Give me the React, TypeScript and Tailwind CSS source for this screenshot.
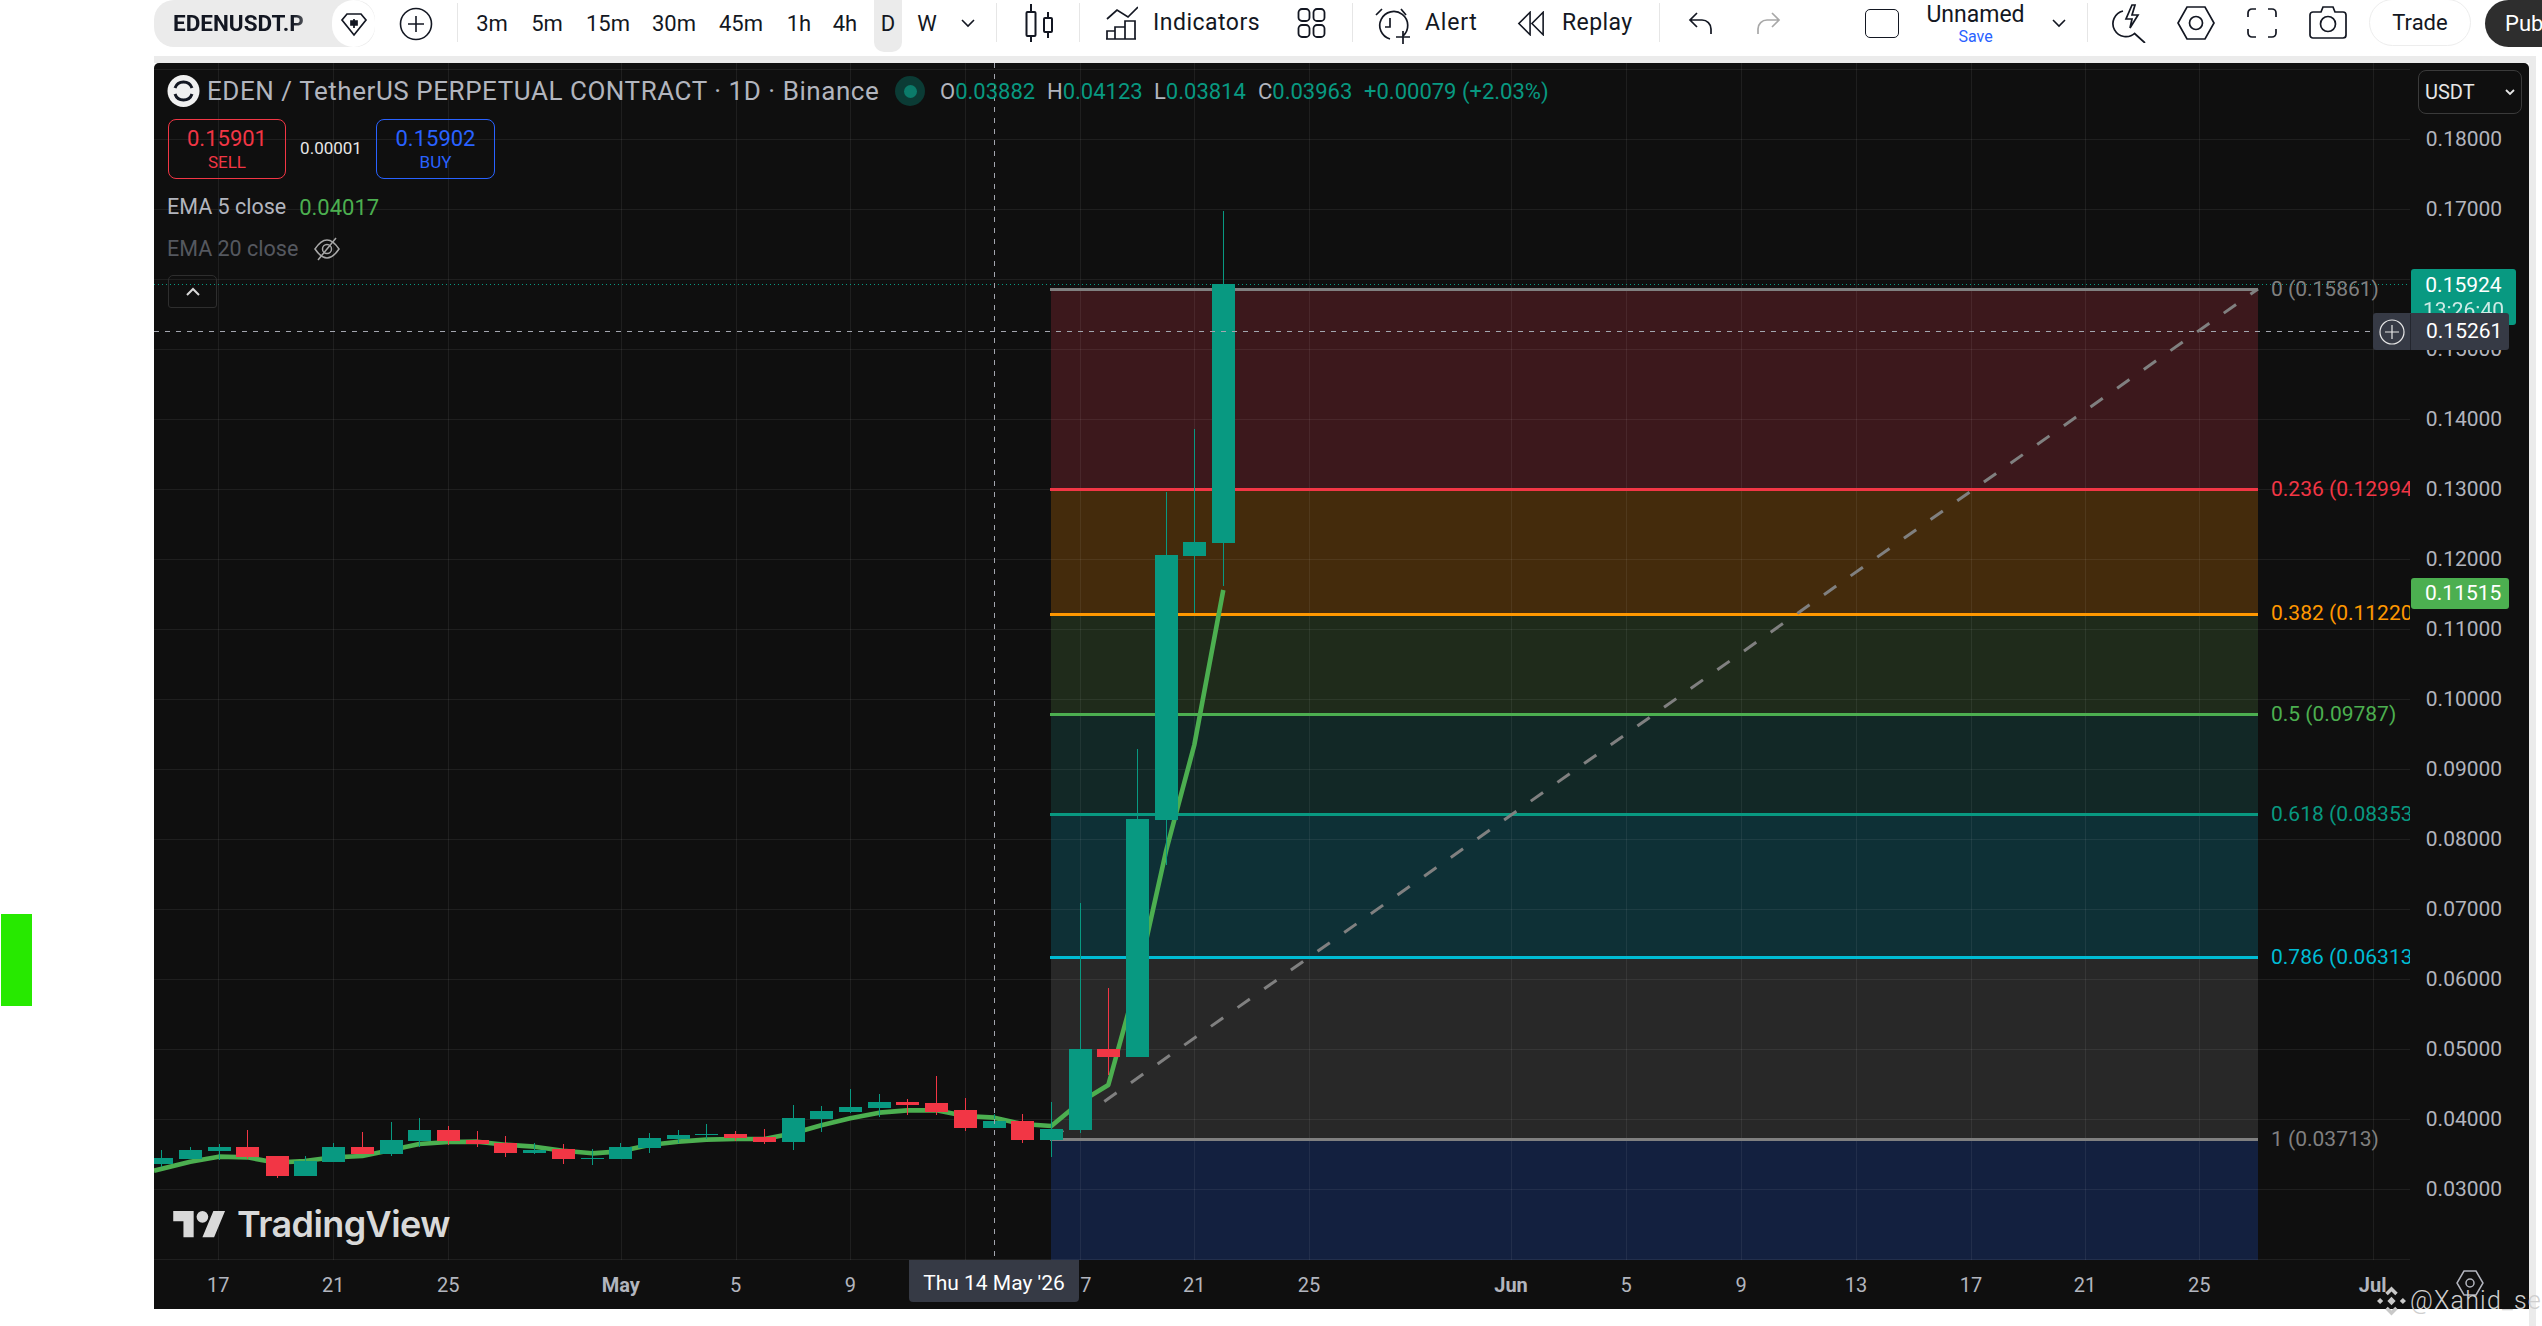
import React from "react";

const TEAL = "#089981";
const RED = "#f23645";

type C = [number, number, number, number, number, string];
const z6: [number, number, number, number, number, string][] = [
  [34, 300, 324, 342, 350, "g"], [121, 292, 300, 327, 327, "g"], [206, 282, 291, 303, 330, "g"], [292, 240, 291, 321, 327, "r"],
  [380, 318, 318, 378, 384, "r"], [464, 318, 333, 378, 378, "g"], [550, 279, 291, 336, 336, "g"], [637, 246, 291, 312, 312, "r"],
  [724, 216, 270, 312, 318, "g"], [808, 204, 240, 273, 291, "g"], [895, 228, 240, 273, 285, "r"], [982, 243, 270, 282, 291, "r"],
  [1066, 258, 279, 309, 321, "r"], [1153, 279, 300, 309, 312, "g"], [1240, 282, 298, 327, 342, "r"], [1327, 297, 324, 327, 345, "g"],
  [1411, 279, 291, 327, 327, "g"],
];
const z7: [number, number, number, number, number, string][] = [
  [28, 249, 264, 294, 309, "g"], [115, 240, 255, 267, 279, "g"], [199, 222, 252, 255, 267, "g"], [286, 243, 252, 264, 273, "r"],
  [373, 237, 261, 276, 282, "r"], [460, 165, 204, 276, 300, "g"], [544, 168, 183, 207, 246, "g"], [631, 117, 171, 186, 189, "g"],
  [718, 132, 156, 174, 201, "g"], [802, 147, 156, 165, 195, "r"], [889, 78, 159, 186, 195, "r"], [976, 144, 180, 234, 243, "r"],
  [1063, 192, 213, 234, 234, "g"], [1147, 192, 213, 270, 279, "r"], [1234, 156, 237, 270, 321, "g"],
];
const candles: C[] = [
  ...z6.map(([x, a, b, c, d, k]): C => [150 + x / 3, 1050 + a / 3, 1050 + b / 3, 1050 + c / 3, 1050 + d / 3, k]),
  ...z7.map(([x, a, b, c, d, k]): C => [640 + x / 3, 1050 + a / 3, 1050 + b / 3, 1050 + c / 3, 1050 + d / 3, k]),
  [1080.3, 903, 1049, 1130, 1133, "g"],
  [1108.3, 988, 1049, 1057, 1075, "r"],
  [1137.3, 749, 819, 1057, 1057, "g"],
  [1166.3, 492, 555, 820, 865, "g"],
  [1194.3, 429, 542, 556, 613, "g"],
  [1223.3, 211, 284, 543, 586, "g"],
];

const ema6: [number, number][] = [[12, 362], [121, 335], [206, 320], [292, 322], [380, 338], [464, 333], [550, 322], [637, 318], [724, 300], [808, 282], [895, 276], [982, 275], [1066, 284], [1153, 290], [1240, 302], [1327, 310], [1411, 304]];
const ema7: [number, number][] = [[28, 285], [115, 275], [199, 269], [286, 267], [373, 267], [460, 250], [544, 226], [631, 205], [718, 188], [802, 181], [889, 181], [976, 198], [1063, 203], [1147, 222], [1234, 228]];
const emaPts = [
  ...ema6.map(([x, y]) => [150 + x / 3, 1050 + y / 3]),
  ...ema7.map(([x, y]) => [640 + x / 3, 1050 + y / 3]),
  [1080.3, 1102], [1108.3, 1085], [1137.3, 980], [1166.3, 850], [1194.3, 745], [1223.3, 590],
].map((p) => p.join(",")).join(" ");

const hGrid = Array.from({ length: 18 }, (_, i) => 69.3 + i * 70);
const vGrid = [218.3, 333.3, 448.3, 620.8, 735.5, 850.3, 965.3, 1080.3, 1194.3, 1309, 1511, 1626, 1741, 1856, 1971, 2085, 2199.3, 2372.7];

const fills: [number, number, string][] = [
  [289, 489, "#3c181c"], [489, 614, "#442b0c"], [614, 714, "#1f2b1b"], [714, 814, "#122826"], [814, 957, "#0e3036"], [957, 1139, "#282828"], [1139, 1260, "#13203f"],
];
const fibs: [number, string, string][] = [
  [289.3, "#808080", "0 (0.15861)"], [489.3, "#f23645", "0.236 (0.12994)"], [614, "#ff9800", "0.382 (0.11220)"], [714.3, "#4caf50", "0.5 (0.09787)"],
  [814.3, "#089981", "0.618 (0.08353)"], [957.3, "#00bcd4", "0.786 (0.06313)"], [1139.3, "#808080", "1 (0.03713)"],
];

const prices = ["0.18000", "0.17000", "0.16000", "0.15000", "0.14000", "0.13000", "0.12000", "0.11000", "0.10000", "0.09000", "0.08000", "0.07000", "0.06000", "0.05000", "0.04000", "0.03000"];

const times: [number, string, boolean][] = [
  [218.3, "17", false], [333.3, "21", false], [448.3, "25", false], [620.8, "May", true], [735.5, "5", false], [850.3, "9", false], [1080.3, "17", false], [1194.3, "21", false],
  [1309, "25", false], [1511, "Jun", true], [1626, "5", false], [1741, "9", false], [1856, "13", false], [1971, "17", false], [2085, "21", false], [2199.3, "25", false], [2372.7, "Jul", true],
];

const intervals: [string, string][] = [
  ["3m", "w-[68px]"], ["5m", "w-[42px]"], ["15m", "w-[80px]"], ["30m", "w-[52px]"], ["45m", "w-[82px]"], ["1h", "w-[34px]"], ["4h", "w-[58px]"],
];

const Divider = () => <div className="w-px h-[39px] mt-[3px] bg-[#e6e6e6] shrink-0" />;

function Header() {
  return (
    <div className="flex h-14 shrink-0 items-start pl-[154px] text-[22px] text-[#131722] whitespace-nowrap bg-white font-['Roboto',sans-serif]">
      <div className="w-[221px] h-[47px] rounded-[20px] bg-[#ebebeb] flex items-center shrink-0">
        <span className="ml-[19px] w-[140px] font-bold text-[22.5px] overflow-hidden bg-clip-text text-transparent bg-gradient-to-r from-[#131722] from-[85%] to-[#8a8a8a]">EDENUSDT.P</span>
        <span className="ml-[19px] w-[43px] h-[47px] rounded-full bg-white flex items-center justify-center">
          <svg width="28" height="26" viewBox="0 0 28 26" fill="none" stroke="#131722" strokeWidth="1.7">
            <path d="M7 3h14l5 6-12 15L2 9z" />
            <path d="M14 8v9M11 10h6v4h-6z" fill="#131722" />
          </svg>
        </span>
      </div>
      <div className="w-[82px] h-[47px] flex items-center justify-center shrink-0">
        <svg width="34" height="34" viewBox="0 0 34 34" fill="none" stroke="#131722" strokeWidth="1.6">
          <circle cx="17" cy="17" r="15.5" />
          <path d="M17 9v16M9 17h16" />
        </svg>
      </div>
      <Divider />
      {intervals.map(([t, w]) => (
        <div key={t} className={`${w} h-[46px] flex items-center justify-center shrink-0`}>{t}</div>
      ))}
      <div className="w-[28px] h-[52px] pb-[6px] rounded-b-[10px] bg-[#ebebeb] flex items-center justify-center shrink-0">D</div>
      <div className="w-[50px] h-[46px] flex items-center justify-center shrink-0">W</div>
      <div className="w-[32px] h-[46px] flex items-center justify-center shrink-0">
        <svg width="16" height="10" viewBox="0 0 16 10" fill="none" stroke="#131722" strokeWidth="1.6"><path d="M2 2l6 6 6-6" /></svg>
      </div>
      <div className="w-[12px] shrink-0" />
      <Divider />
      <div className="w-[82px] h-[46px] flex items-center justify-center shrink-0">
        <svg width="30" height="40" viewBox="0 0 30 40" fill="none" stroke="#131722" strokeWidth="2" className="ml-[4px]">
          <path d="M6 1v8M6 33v6" /><rect x="1.5" y="9" width="9" height="24" rx="1" />
          <path d="M23 9v6M23 29v6" /><rect x="19" y="15" width="8" height="14" rx="1" />
        </svg>
      </div>
      <Divider />
      <div className="w-[200px] h-[46px] flex items-center shrink-0 pl-[26px]">
        <svg width="32" height="34" viewBox="0 0 32 34" fill="none" stroke="#131722" strokeWidth="1.7" className="shrink-0">
          <path d="M1 13l10-9 11 7L32 1" />
          <path d="M1 33V25h8v8zM9 33V21h10v12zM19 33V15h10v18zM0 33h30" />
        </svg>
        <span className="ml-[15px] text-[23px] tracking-[0.5px]">Indicators</span>
      </div>
      <div className="w-[72px] h-[46px] flex items-center justify-center shrink-0 pr-[10px]">
        <svg width="29" height="30" viewBox="0 0 28 30" fill="none" stroke="#131722" strokeWidth="1.8">
          <rect x="1" y="1" width="11" height="12" rx="3.5" /><rect x="16" y="1" width="11" height="12" rx="3.5" />
          <rect x="1" y="17" width="11" height="12" rx="3.5" /><rect x="16" y="17" width="11" height="12" rx="3.5" />
        </svg>
      </div>
      <Divider />
      <div className="w-[306px] h-[46px] flex items-center shrink-0 pl-[22px]">
        <svg width="38" height="36" viewBox="0 0 38 36" fill="none" stroke="#131722" strokeWidth="1.7" className="shrink-0 mt-[6px]">
          <path d="M28 28a14 14 0 1 0-13 3" />
          <path d="M15 10v9h-5M1 7l6-6M31 7l-5-6M28 23v13M21 29h14" />
        </svg>
        <span className="ml-[12px] w-[54px] text-[23px] tracking-[0.8px]">Alert</span>
        <svg width="28" height="25" viewBox="0 0 30 26" fill="none" stroke="#131722" strokeWidth="1.7" className="ml-[38px] shrink-0">
          <path d="M14 1L2 13l12 12zM28 1L16 13l12 12z" />
        </svg>
        <span className="ml-[17px] text-[23px] tracking-[0.4px]">Replay</span>
      </div>
      <Divider />
      <div className="w-[205px] h-[46px] flex items-center shrink-0 pl-[28px]">
        <svg width="25" height="24" viewBox="0 0 25 24" fill="none" stroke="#131722" strokeWidth="1.7" className="shrink-0">
          <path d="M9 2L2 9l7 7M2 9h12a9 9 0 0 1 9 9v5" />
        </svg>
        <svg width="25" height="24" viewBox="0 0 25 24" fill="none" stroke="#a8a8a8" strokeWidth="1.7" className="ml-[43px] shrink-0">
          <path d="M16 2l7 7-7 7M23 9H11a9 9 0 0 0-9 9v5" />
        </svg>
      </div>
      <div className="w-[35px] h-[46px] flex items-center shrink-0">
        <div className="w-[34px] h-[29px] border-[1.6px] border-[#131722] rounded-[5px]" />
      </div>
      <div className="w-[151px] flex flex-col items-center shrink-0">
        <span className="leading-[26px] mt-[2px] text-[23px]">Unnamed</span>
        <span className="text-[16px] leading-[17px] text-[#2962ff]">Save</span>
      </div>
      <svg width="16" height="10" viewBox="0 0 16 10" fill="none" stroke="#131722" strokeWidth="1.6" className="mr-[20px] mt-[18px] shrink-0"><path d="M2 2l6 6 6-6" /></svg>
      <Divider />
      <div className="h-[46px] flex items-center shrink-0 pl-[24px]">
        <svg width="34" height="40" viewBox="0 0 34 40" fill="none" stroke="#131722" strokeWidth="1.7" className="shrink-0">
          <path d="M11 8a13 13 0 1 0 12 22M22 30l11 10" />
          <path d="M20 2l-6 14h6l-2 9 8-13h-6l3-10z" />
        </svg>
        <svg width="38" height="36" viewBox="0 0 38 36" fill="none" stroke="#131722" strokeWidth="1.7" className="ml-[31px] shrink-0">
          <path d="M10 2h18l9 16-9 16H10L1 18z" /><circle cx="19" cy="18" r="6.5" />
        </svg>
        <svg width="30" height="30" viewBox="0 0 30 30" fill="none" stroke="#131722" strokeWidth="1.7" className="ml-[32px] shrink-0">
          <path d="M1 9V5a4 4 0 0 1 4-4h4M21 1h4a4 4 0 0 1 4 4v4M29 21v4a4 4 0 0 1-4 4h-4M9 29H5a4 4 0 0 1-4-4v-4" />
        </svg>
        <svg width="38" height="34" viewBox="0 0 38 34" fill="none" stroke="#131722" strokeWidth="1.7" className="ml-[32px] shrink-0">
          <path d="M4 6h8l2-5h10l2 5h8a3 3 0 0 1 3 3v20a3 3 0 0 1-3 3H4a3 3 0 0 1-3-3V9a3 3 0 0 1 3-3z" /><circle cx="19" cy="18" r="7.5" />
        </svg>
      </div>
      <div className="ml-[22px] w-[102px] h-[47px] rounded-[24px] border border-[#ededed] flex items-center justify-center shrink-0 mt-[-1px]">Trade</div>
      <div className="ml-[14px] w-[80px] h-[47px] rounded-l-[24px] bg-[#2e2e2e] text-white flex items-center pl-[20px] shrink-0">Pub</div>
    </div>
  );
}

function Plot() {
  return (
    <svg className="absolute left-0 top-0" width="2375" height="1246" viewBox="154 63 2375 1246">
      <g shapeRendering="crispEdges">
        {fills.map(([a, b, col]) => <rect key={a} x="1051" y={a} width="1207" height={b - a} fill={col} />)}
        {hGrid.map((y) => <rect key={y} x="154" y={Math.round(y) - 0.5} width="2256" height="1" fill="#ffffff" opacity="0.065" />)}
        {vGrid.map((x) => <rect key={x} x={Math.round(x) - 0.5} y="63" width="1" height="1197" fill="#ffffff" opacity="0.065" />)}
        {fibs.map(([y, col]) => <rect key={y} x="1050" y={Math.round(y) - 1.5} width="1208" height="3" fill={col} />)}
      </g>
      <line x1="1051" y1="1139" x2="2258" y2="289" stroke="#808080" strokeWidth="3" strokeDasharray="15 17.6" />
      <polyline points={emaPts} fill="none" stroke="#4caf50" strokeWidth="4.6" strokeLinejoin="round" />
      <g shapeRendering="crispEdges">
        {candles.map(([x, wt, bt, bb, wb, k], i) => {
          const col = k === "g" ? TEAL : RED;
          const cx = Math.round(x);
          return (
            <g key={i} fill={col}>
              <rect x={cx} y={wt} width="1" height={wb - wt} />
              <rect x={cx - 11} y={bt} width="23" height={Math.max(bb - bt, 1)} />
            </g>
          );
        })}
      </g>
      <line x1="154" y1="284.5" x2="2410" y2="284.5" stroke={TEAL} strokeWidth="1" strokeDasharray="1 3" />
      <line x1="154" y1="331.5" x2="2373" y2="331.5" stroke="#a3a6af" strokeWidth="1" strokeDasharray="5 6" />
      <line x1="994.5" y1="63" x2="994.5" y2="1260" stroke="#a3a6af" strokeWidth="1" strokeDasharray="5 6" />
    </svg>
  );
}

function Legend() {
  return (
    <div className="absolute left-[13px] top-[12px] flex flex-col items-start whitespace-nowrap">
      <div className="flex items-center h-[32px] text-[#b2b5be]">
        <svg width="33" height="32" viewBox="0 0 33 32" className="shrink-0">
          <circle cx="16.5" cy="16" r="16" fill="#f0f0f0" />
          <path d="M8 13a9 9 0 0 1 17 0M8 19a9 9 0 0 0 17 0" fill="none" stroke="#131722" strokeWidth="3" />
        </svg>
        <span className="ml-[7px] text-[26px] tracking-[0.55px] w-[676px]">EDEN / TetherUS PERPETUAL CONTRACT · 1D · Binance</span>
        <span className="ml-[12px] w-[30px] h-[30px] rounded-full bg-[#0b3b35] flex items-center justify-center shrink-0">
          <span className="w-[13px] h-[13px] rounded-full bg-[#0b7b6a]" />
        </span>
        <div className="ml-[15px] flex text-[22px]">
          <span className="w-[107px]">O<span className="text-[#089981]">0.03882</span></span>
          <span className="w-[107px]">H<span className="text-[#089981]">0.04123</span></span>
          <span className="w-[104px]">L<span className="text-[#089981]">0.03814</span></span>
          <span className="w-[106px]">C<span className="text-[#089981]">0.03963</span></span>
          <span className="text-[#089981]">+0.00079 (+2.03%)</span>
        </div>
      </div>
      <div className="flex items-center mt-[12px] ml-px">
        <div className="w-[118px] h-[60px] rounded-[8px] border border-[#f23645] flex flex-col items-center justify-center text-[#f23645]">
          <span className="text-[22px] leading-[25px]">0.15901</span>
          <span className="text-[17px] leading-[22px]">SELL</span>
        </div>
        <span className="w-[90px] text-center text-[17px] text-[#e6e6e6]">0.00001</span>
        <div className="w-[119px] h-[60px] rounded-[8px] border border-[#2962ff] flex flex-col items-center justify-center text-[#2962ff]">
          <span className="text-[22px] leading-[25px]">0.15902</span>
          <span className="text-[17px] leading-[22px]">BUY</span>
        </div>
      </div>
      <div className="flex items-center h-[42px] mt-[7px] text-[21.5px] text-[#b2b5be]">
        EMA 5 close<span className="ml-[13px] text-[22px] text-[#4caf50]">0.04017</span>
      </div>
      <div className="flex items-center h-[42px] text-[21.5px] text-[#55585f]">
        EMA 20 close
        <svg width="28" height="24" viewBox="0 0 28 24" fill="none" stroke="#a8a8a8" strokeWidth="1.5" className="ml-[15px]">
          <path d="M2 12c4-6 8-9 12-9s8 3 12 9c-4 6-8 9-12 9s-8-3-12-9z" /><circle cx="14" cy="12" r="4.5" /><path d="M5 23L23 1" stroke="#a8a8a8" />
        </svg>
      </div>
      <div className="w-[49px] h-[33px] mt-[5px] ml-px rounded-t-[5px] rounded-b-[3px] border border-[#2e2e2e] flex items-center justify-center">
        <svg width="16" height="10" viewBox="0 0 16 10" fill="none" stroke="#d8d8d8" strokeWidth="2"><path d="M2 8l6-6 6 6" /></svg>
      </div>
    </div>
  );
}

function PriceAxis() {
  return (
    <div className="absolute left-[2263px] top-[41px] w-[94px] flex flex-col items-center text-[21px] text-[#b2b5be]">
      {prices.map((p) => <div key={p} className="h-[70px] flex items-center leading-none">{p}</div>)}
    </div>
  );
}

function Chart() {
  return (
    <div className="relative w-[2375px] h-[1246px] shrink-0 bg-[#0f0f0f] rounded-t-[5px] overflow-hidden font-['Roboto',sans-serif]">
      <Plot />
      <Legend />
      <div className="absolute left-[2264px] top-[7px] w-[104px] h-[44px] rounded-[8px] border border-[#3a3a3a] flex items-center justify-between px-[6px] text-[20px] text-[#e6e6e6]">
        USDT
        <svg width="10" height="8" viewBox="0 0 10 8" fill="none" stroke="#e6e6e6" strokeWidth="1.8"><path d="M1 2l4 4 4-4" /></svg>
      </div>
      {fibs.map(([y, col, t]) => (
        <div key={t} className="absolute left-[2117px] w-[139px] h-[28px] flex items-center text-[21px] whitespace-nowrap overflow-hidden" style={{ top: y - 63 - 14, color: col }}>{t}</div>
      ))}
      <PriceAxis />
      <div className="absolute left-[2257px] top-[206px] w-[105px] h-[56px] rounded-[3px] bg-[#089981] text-white text-[21px] flex flex-col items-center leading-[25px] pt-[4px]">
        <span>0.15924</span><span className="opacity-80">13:26:40</span>
      </div>
      <div className="absolute left-[2219px] top-[250px] w-[136px] h-[37px] rounded-[3px] bg-[#363a45] flex items-center text-white text-[21px] pt-[1px]">
        <span className="w-[38px] h-[36px] flex items-center justify-center border-r border-[#23262e]">
          <svg width="26" height="26" viewBox="0 0 26 26" fill="none" stroke="#e6e6e6" strokeWidth="1.2"><circle cx="13" cy="13" r="12" /><path d="M13 6v14M6 13h14" /></svg>
        </span>
        <span className="ml-[15px]">0.15261</span>
      </div>
      <div className="absolute left-[2257px] top-[515px] w-[98px] h-[31px] rounded-[3px] bg-[#4caf50] text-white text-[21px] flex items-center pl-[14px]">0.11515</div>

      <div className="absolute left-[19px] top-[1143px] flex items-center">
        <svg width="53" height="27" viewBox="0 0 36 18.5" fill="#d9d9d9">
          <path d="M14 18H7V7H0V0h14v18zM28 18h-8l7.5-18h8L28 18z" /><circle cx="20" cy="4" r="4" />
        </svg>
        <span className="ml-[11px] text-[36px] leading-[36px] font-semibold tracking-[-0.6px] text-[#d9d9d9] font-['Inter',sans-serif]">TradingView</span>
      </div>

      <div className="absolute left-0 top-[1197px] w-[2375px] h-[49px] text-[20px] text-[#b2b5be]">
        {times.map(([x, t, b]) => (
          <span key={x} className={`absolute top-[10px] -translate-x-1/2 ${b ? "font-bold" : ""}`} style={{ left: x - 154 }}>{t}</span>
        ))}
        <div className="absolute left-[755px] top-0 w-[170px] h-[42px] rounded-b-[4px] bg-[#363a45] text-white flex items-center justify-center text-[21px] pt-[5px]">Thu 14 May '26</div>
        <svg width="28" height="26" viewBox="0 0 28 26" fill="none" stroke="#b2b5be" strokeWidth="1.5" className="absolute left-[2302px] top-[10px]">
          <path d="M8 1h12l7 12-7 12H8L1 13z" /><circle cx="14" cy="13" r="4" />
        </svg>
      </div>
    </div>
  );
}

export default function App() {
  return (
    <div className="relative w-[2542px] h-[1326px] overflow-hidden bg-white">
      <Header />
      <div className="flex h-[1270px]">
        <div className="w-[154px] shrink-0 pt-[858px]">
          <div className="ml-px w-[31px] h-[92px] bg-[#27e900]" />
        </div>
        <div className="flex flex-col shrink-0">
          <div className="h-[7px] bg-[#ebebeb]" />
          <Chart />
        </div>
        <div className="w-[7px] bg-[#ebebeb] shrink-0" />
      </div>
      <div className="absolute left-[2377px] top-[1286px] flex items-center text-[25px] leading-[30px] tracking-[1.2px] font-light text-[#cfcfcf] whitespace-nowrap font-['Roboto',sans-serif]">
        <svg width="29" height="30" viewBox="0 0 28 28" fill="#c8c8c8">
          <path d="M14 0l6 6-2.4 2.4L14 4.8l-3.6 3.6L8 6zM14 28l6-6-2.4-2.4-3.6 3.6-3.6-3.6L8 22zM3 11l3 3-3 3-3-3zM25 11l3 3-3 3-3-3zM14 10l4 4-4 4-4-4z" />
        </svg>
        <span className="ml-[4px]">@Xahid_se</span>
      </div>
    </div>
  );
}
